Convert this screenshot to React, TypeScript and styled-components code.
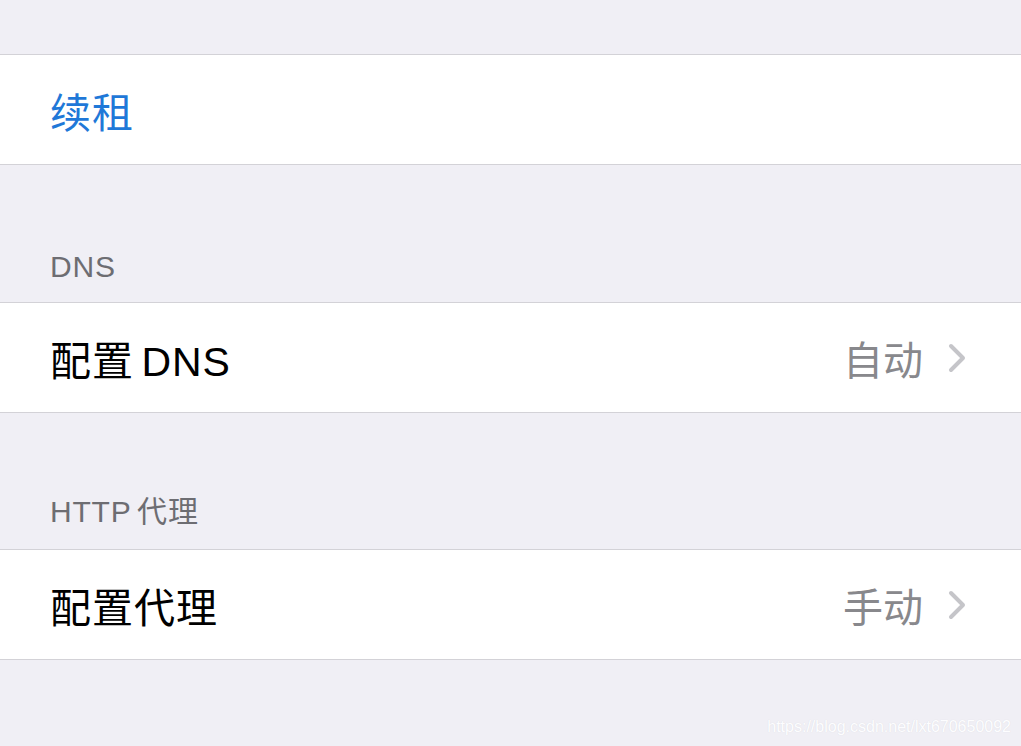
import React from 'react';
import styled, { createGlobalStyle } from 'styled-components';

const Global = createGlobalStyle`
  html, body {
    margin: 0;
    padding: 0;
    background: #f0eff5;
  }
  body {
    font-family: "Liberation Sans", "Noto Sans CJK SC", sans-serif;
  }
`;

const Page = styled.div`
  position: relative;
  width: 1021px;
  height: 746px;
  overflow: hidden;
  background: #f0eff5;
  padding-top: 54px;
  box-sizing: border-box;
`;

const Group = styled.div`
  background: #fff;
  border-top: 1px solid #d3d2d7;
  border-bottom: 1px solid #d3d2d7;
`;

const Row = styled.div`
  height: 109px;
  display: flex;
  align-items: center;
  padding: 0 54px 0 50px;
`;

const Label = styled.span<{ $accent?: boolean }>`
  font-size: 41px;
  color: ${(p) => (p.$accent ? '#1f78d8' : '#000')};
  flex: 1;
  letter-spacing: 1px;
  word-spacing: -5px;
`;

const Value = styled.span`
  font-size: 40px;
  color: #88888c;
  margin-right: 24px;
`;

const Header = styled.div<{ $h: number }>`
  height: ${(p) => p.$h}px;
  display: flex;
  align-items: flex-end;
  padding: 0 0 18px 50px;
  box-sizing: border-box;
  font-size: 30px;
  color: #6d6d72;
  letter-spacing: 0.8px;
  word-spacing: -3px;
`;

const Chevron = () => (
  <svg width="20" height="30" viewBox="0 0 20 30">
    <polyline points="4,3 16,15 4,27" fill="none" stroke="#c5c5c9" strokeWidth="4" strokeLinecap="round" strokeLinejoin="round" />
  </svg>
);

const Watermark = styled.div`
  position: absolute;
  right: 10px;
  bottom: 10px;
  font-size: 16px;
  color: #fdfdff;
  text-shadow: 0 0 1px #d8d8dd;
`;

const App: React.FC = () => (
  <Page>
    <Global />
    <Group>
      <Row>
        <Label $accent>续租</Label>
      </Row>
    </Group>
    <Header $h={137}>DNS</Header>
    <Group>
      <Row>
        <Label>配置 DNS</Label>
        <Value>自动</Value>
        <Chevron />
      </Row>
    </Group>
    <Header $h={136}>HTTP 代理</Header>
    <Group>
      <Row>
        <Label>配置代理</Label>
        <Value>手动</Value>
        <Chevron />
      </Row>
    </Group>
    <Watermark>https://blog.csdn.net/lxt670650092</Watermark>
  </Page>
);

export default App;
